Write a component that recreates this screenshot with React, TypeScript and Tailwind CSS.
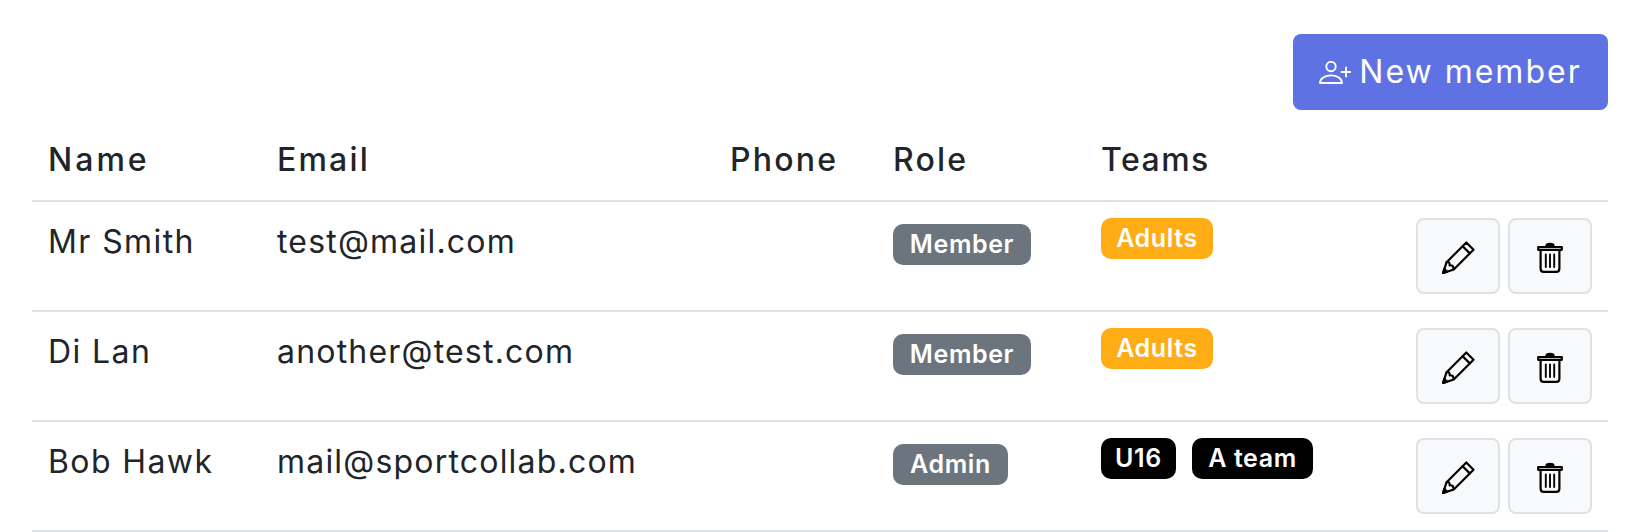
import React from "react";

function UserPlus() {
  return (
    <svg viewBox="0 0 32 23" className="h-[23px] w-[32px]" fill="none" stroke="currentColor" strokeWidth="1.9" strokeLinecap="round" strokeLinejoin="round">
      <circle cx="12" cy="5.6" r="4.7" />
      <path d="M1 22c0-4.6 5-7.6 11-7.6s11 3 11 7.6z" />
      <path d="M27 6.5v9M22.5 11h9" />
    </svg>
  );
}

function Pencil() {
  return (
    <svg viewBox="0 0 34 34" className="mt-[3px] h-[35px] w-[35px]" fill="none" stroke="#000" strokeWidth="2.1" strokeLinejoin="round" strokeLinecap="round">
      <path d="M2 32l3.4-10.4L24.6 2.4l7 7L12.4 28.6z" />
      <path d="M21 6l7 7M5.4 21.6c2.5-.6 3.2.6 3 3 2.5-.4 3.8.6 3.8 3.8" />
      <path d="M2 32l4-1.2-2.8-2.8z" fill="#000" />
    </svg>
  );
}

function Trash() {
  return (
    <svg viewBox="0 0 26 31" className="mt-[3px] h-[31px] w-[26px]" fill="none" stroke="#000" strokeWidth="2.2" strokeLinejoin="round" strokeLinecap="round">
      <path d="M1.2 5h23.6v2.8H1.2z" />
      <path d="M9.5 3.5c0-2.2 7-2.2 7 0z" fill="#000" />
      <path d="M3.6 8v18.4c0 2 1.2 3.4 3.1 3.4h12.6c1.9 0 3.1-1.4 3.1-3.4V8" />
      <path d="M8.8 12.5v12.5M13 12.5v12.5M17.2 12.5v12.5" strokeWidth="1.9" />
    </svg>
  );
}

function Badge({ label, color }: { label: string; color: string }) {
  return (
    <span className={`inline-flex h-[41px] items-center justify-center rounded-[10px] text-[25px] font-semibold leading-none tracking-[0.6px] text-white ${color}`}>
      {label}
    </span>
  );
}

const rows = [
  { name: "Mr Smith", email: "test@mail.com", role: "Member", roleW: "w-[138px]", teams: [{ label: "Adults", color: "w-[112px] bg-[#ffac15]" }] },
  { name: "Di Lan", email: "another@test.com", role: "Member", roleW: "w-[138px]", teams: [{ label: "Adults", color: "w-[112px] bg-[#ffac15]" }] },
  { name: "Bob Hawk", email: "mail@sportcollab.com", role: "Admin", roleW: "w-[115px]", teams: [{ label: "U16", color: "w-[75px] bg-black" }, { label: "A team", color: "w-[121px] bg-black" }] },
];

export default function App() {
  return (
    <div className="h-[532px] w-[1636px] bg-white pl-[32px] pr-[28px] pt-[34px] font-['Inter','Liberation_Sans',sans-serif] text-[#212529]">
      <div className="flex justify-end">
        <button className="flex h-[76px] w-[315px] items-center justify-center gap-[8px] rounded-[8px] bg-[#5e72e4] text-[32px] tracking-[2px] text-white">
          <UserPlus />
          New member
        </button>
      </div>
      <table className="w-[1576px] table-fixed border-collapse">
        <colgroup>
          <col className="w-[229px]" />
          <col className="w-[453px]" />
          <col className="w-[163px]" />
          <col className="w-[208px]" />
          <col className="w-[523px]" />
        </colgroup>
        <thead>
          <tr className="h-[91px] border-b-2 border-[#dee2e6] text-left text-[32px]">
            {["Name", "Email", "Phone", "Role", "Teams"].map((h, i) => (
              <th key={h} className={`px-[16px] pb-[16px] pt-[16px] align-bottom font-medium ${i === 0 ? "tracking-[3px]" : i === 4 ? "tracking-[1.5px]" : "tracking-[2.2px]"}`}>{h}</th>
            ))}
          </tr>
        </thead>
        <tbody>
          {rows.map((r) => (
            <tr key={r.email} className="h-[110px] border-b-2 border-[#dee2e6] text-[32px]">
              <td className="px-[16px] pt-[16px] align-top leading-[48px] tracking-[1.4px]">{r.name}</td>
              <td className="whitespace-nowrap px-[16px] pt-[16px] align-top leading-[48px] tracking-[1.2px]">{r.email}</td>
              <td className="px-[16px]" />
              <td className="px-[16px] pt-[22px] align-top">
                <div className="flex">
                  <Badge label={r.role} color={`bg-[#6c757d] ${r.roleW}`} />
                </div>
              </td>
              <td className="px-[16px] pt-[16px] align-top">
                <div className="flex items-start justify-between">
                  <div className="flex gap-[16px]">
                    {r.teams.map((t) => (
                      <Badge key={t.label} label={t.label} color={t.color} />
                    ))}
                  </div>
                  <div className="flex gap-[8px]">
                    <button className="flex h-[76px] w-[84px] items-center justify-center rounded-[8px] border-2 border-[#dee2e6] bg-[#f8f9fa]"><Pencil /></button>
                    <button className="flex h-[76px] w-[84px] items-center justify-center rounded-[8px] border-2 border-[#dee2e6] bg-[#f8f9fa]"><Trash /></button>
                  </div>
                </div>
              </td>
            </tr>
          ))}
        </tbody>
      </table>
    </div>
  );
}
